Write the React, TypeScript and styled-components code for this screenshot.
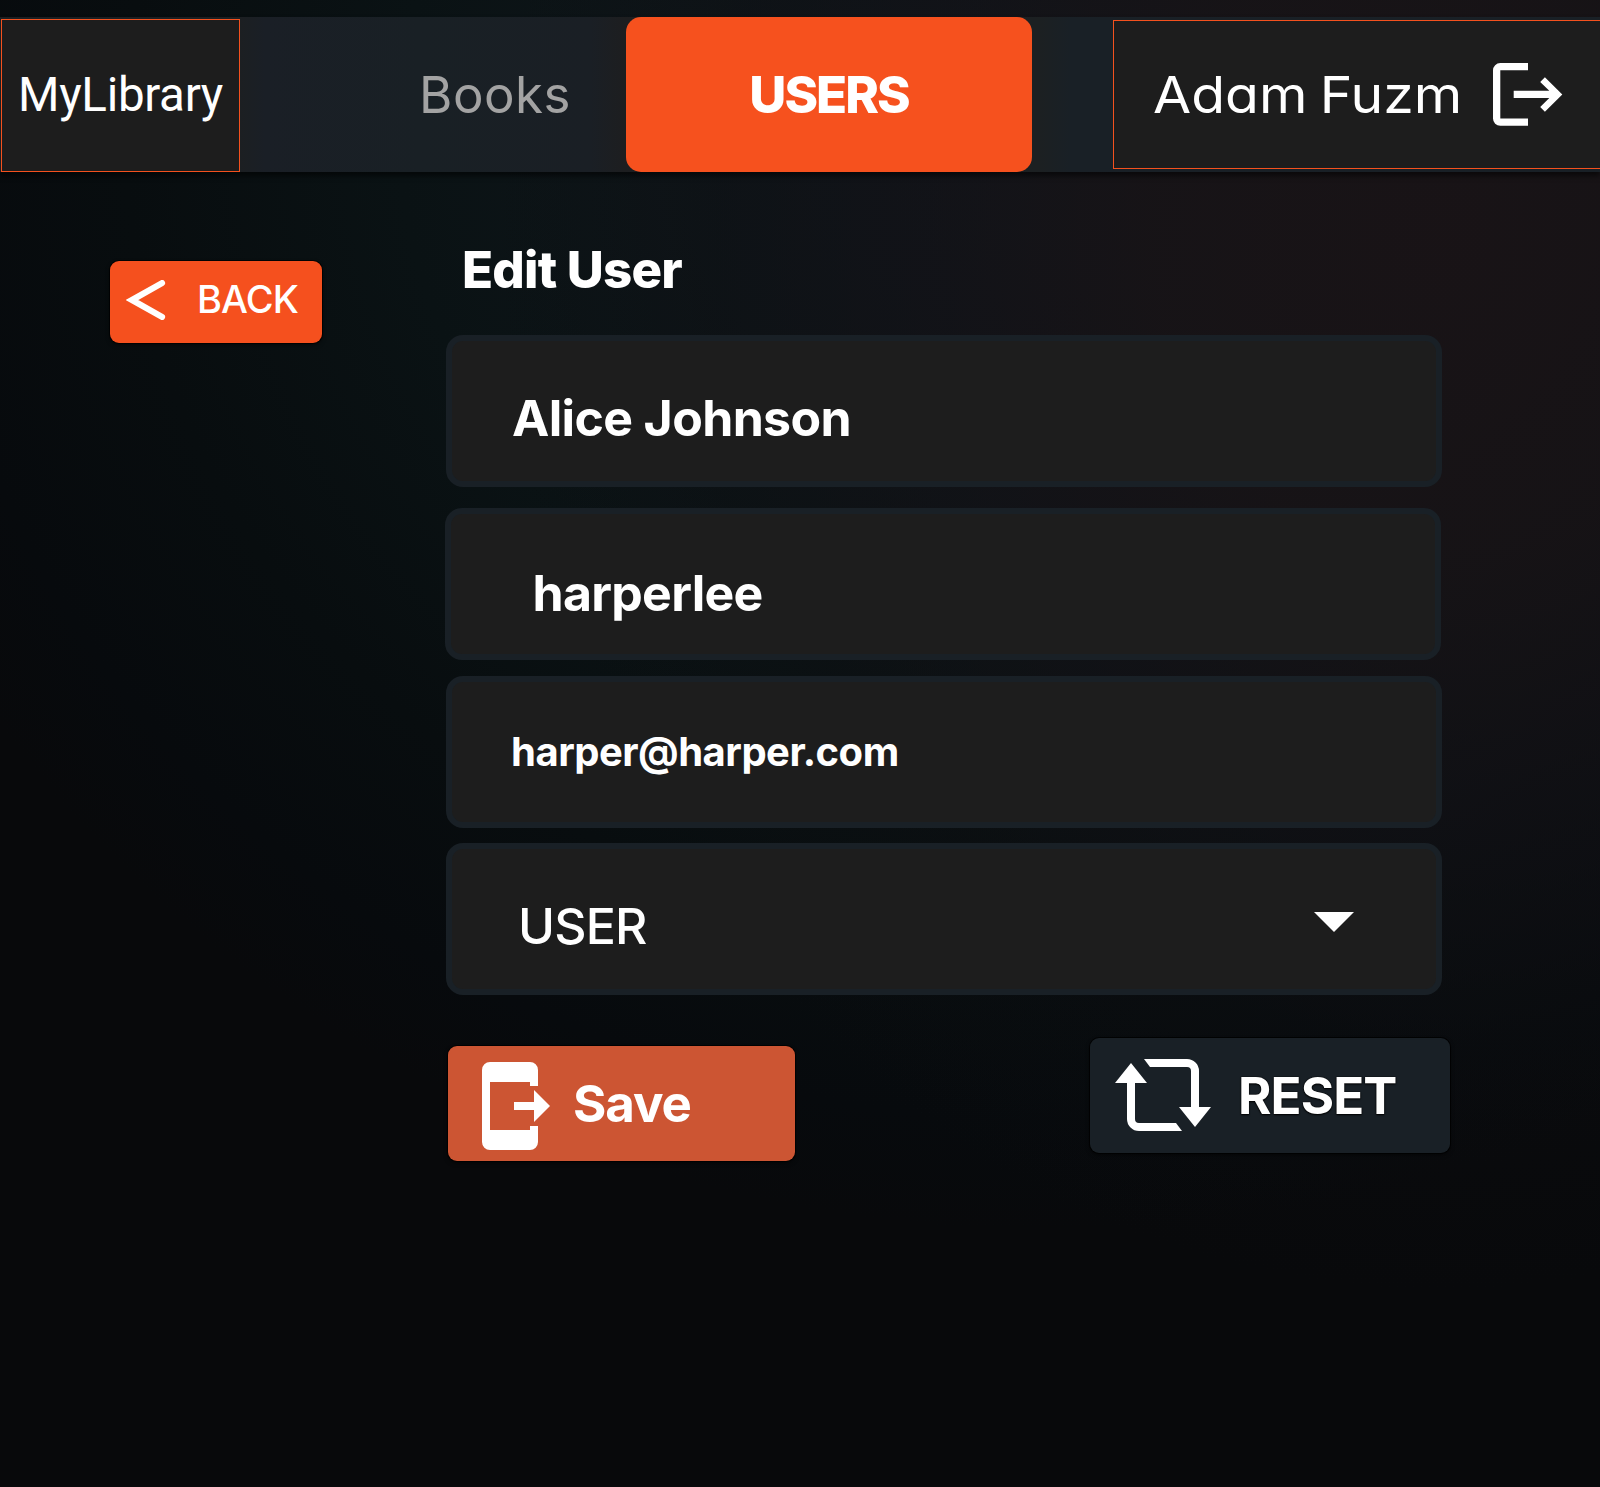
import React from "react";
import styled, { createGlobalStyle } from "styled-components";

const GlobalStyle = createGlobalStyle`
  *, *::before, *::after { box-sizing: border-box; }
  body { margin: 0; background: #08090b; }
`;

const Page = styled.div`
  width: 1600px;
  height: 1487px;
  padding-top: 17px;
  overflow: hidden;
  color: #fff;
  font-family: Inter, "Liberation Sans", sans-serif;
  background:
    radial-gradient(
      950px 1050px at 1440px 240px,
      rgba(25, 19, 22, 0.95) 0%,
      rgba(24, 19, 22, 0.85) 30%,
      rgba(19, 17, 22, 0.65) 54%,
      rgba(13, 14, 17, 0.4) 76%,
      rgba(8, 9, 11, 0) 100%
    ),
    radial-gradient(
      1250px 1100px at 1050px 130px,
      #10171d 0%,
      #0e1519 30%,
      #0a1214 52%,
      #080d0f 74%,
      #070a0d 90%,
      #08090b 100%
    );
`;

const Header = styled.header`
  display: flex;
  height: 155px;
  background: linear-gradient(
    90deg,
    #1c1f22 240px,
    #1a1f26 265px,
    #192025 420px,
    #1a1f25 590px,
    #1d1e20 624px,
    #1c2022 1040px,
    #192026 1070px
  );
  box-shadow: 0 4px 5px rgba(0, 0, 0, 0.55);
`;

const Logo = styled.div`
  width: 239px;
  height: 153px;
  margin: 2px 0 0 1px;
  padding-left: 16px;
  border: 1px solid #f4511e;
  background: #1d1d1d;
  display: flex;
  align-items: center;
`;

const Nav = styled.nav`
  display: flex;
  width: 873px;
`;

const Tab = styled.a<{ $active?: boolean }>`
  display: flex;
  align-items: center;
  justify-content: ${(p) => (p.$active ? "center" : "flex-end")};
  width: ${(p) => (p.$active ? 406 : 386)}px;
  padding-right: ${(p) => (p.$active ? 0 : 55)}px;
  border-radius: 15px;
  background: ${(p) => (p.$active ? "#f6511e" : "transparent")};
`;

const Account = styled.div`
  flex: 1;
  height: 149px;
  margin-top: 3px;
  padding: 0 37px 0 39px;
  border: 1px solid #f4511e;
  border-right: 0;
  background: #1d1d1d;
  display: flex;
  align-items: center;
  justify-content: space-between;
`;

const Label = styled.span<{
  $size: number;
  $weight?: number;
  $track?: number;
  $color?: string;
  $round?: boolean;
  $outlined?: boolean;
}>`
  white-space: pre;
  line-height: 1.2;
  font-size: ${(p) => p.$size}px;
  font-weight: ${(p) => p.$weight ?? 400};
  letter-spacing: ${(p) => p.$track ?? 0}px;
  color: ${(p) => p.$color ?? "#fff"};
  font-feature-settings: ${(p) => (p.$round ? '"cv11" 1' : "normal")};
  text-shadow: ${(p) =>
    p.$outlined ? "0 0 1px #000, 0 0 1px #000, 0 1px 2px #000" : "none"};
`;

const Brand = styled(Label)`
  font-family: Roboto, sans-serif;
`;

const WideLabel = styled(Label)`
  word-spacing: -3px;
  transform: scaleX(1.085);
  transform-origin: left center;
`;

const Main = styled.main`
  display: grid;
  grid-template-columns: 212px 1005px;
  column-gap: 123px;
  padding: 67px 0 0 110px;
  align-items: start;
`;

const Button = styled.button<{ $bg: string; $w: number; $h: number; $pad: number; $gap: number }>`
  display: flex;
  align-items: center;
  gap: ${(p) => p.$gap}px;
  width: ${(p) => p.$w}px;
  height: ${(p) => p.$h}px;
  padding: 0 0 0 ${(p) => p.$pad}px;
  border: 0;
  border-radius: 9px;
  background: ${(p) => p.$bg};
  font-family: inherit;
  box-shadow: 0 0 0 1px rgba(0, 0, 0, 0.8), 0 2px 4px rgba(0, 0, 0, 0.6);
`;

const BackSlot = styled.div`
  padding-top: 22px;
`;

const BackLabel = styled(Label)`
  padding-bottom: 4px;
`;

const Icon = styled.svg<{ $up?: number; $down?: number }>`
  display: block;
  flex: none;
  margin-bottom: ${(p) => p.$up ?? 0}px;
  margin-top: ${(p) => p.$down ?? 0}px;
  fill: #fff;
`;

const Form = styled.section`
  display: flex;
  flex-direction: column;
`;

const Title = styled.h1`
  margin: 0 0 34px 17px;
  height: 62px;
  font-size: 51px;
  line-height: 62px;
  font-weight: 800;
  letter-spacing: -0.8px;
`;

const Field = styled.div<{ $gap: number; $indent: number; $drop?: number; $shift?: number }>`
  display: flex;
  align-items: center;
  justify-content: space-between;
  width: 996px;
  height: 152px;
  margin: 0 0 ${(p) => p.$gap}px ${(p) => p.$shift ?? 1}px;
  padding: ${(p) => p.$drop ?? 0}px 82px 0 ${(p) => p.$indent}px;
  border: 6px solid #192026;
  border-radius: 17px;
  background: #1d1d1d;
`;

const Actions = styled.div`
  display: flex;
  justify-content: space-between;
  padding-left: 3px;
`;

const SaveSlot = styled.div`
  padding-top: 8px;
`;

const ChevronIcon = () => (
  <Icon $up={4} width="40" height="40" viewBox="0 0 40 40">
    <path d="M36 3.1 6 20l30 16.9" fill="none" stroke="#fff" strokeWidth="6.2" strokeLinecap="round" />
  </Icon>
);

const LogoutIcon = () => (
  <Icon width="70" height="63" viewBox="0 0 70 63">
    <path d="M35 0v7.3H7.3v48.2H35v7.3H7.3A7.3 7.3 0 0 1 0 55.5V7.3A7.3 7.3 0 0 1 7.3 0z" />
    <path d="M51.9 14.2 69.3 31.4 51.9 48.7 47.2 44l9.1-9H20.7v-7.3h35.6l-9.1-8.8z" />
  </Icon>
);

const SaveIcon = () => (
  <Icon $down={4} width="68" height="88" viewBox="0 0 68 88">
    <path d="M8 0h40a8 8 0 0 1 8 8v16h-8v-4H8v48h40v-4h8v16a8 8 0 0 1-8 8H8a8 8 0 0 1-8-8V8a8 8 0 0 1 8-8z" />
    <path d="M32 40h20V28l16 16-16 16V48H32z" />
  </Icon>
);

const ResetIcon = () => (
  <Icon $up={1} width="96" height="72" viewBox="0 0 96 72">
    <path d="M16 4 32 24H20v36a4 4 0 0 0 4 4h37l6 8H24a12 12 0 0 1-12-12V24H0z" />
    <path d="M29 0h43a12 12 0 0 1 12 12v36h12L80 68 64 48h12V12a4 4 0 0 0-4-4H35z" />
  </Icon>
);

const CaretIcon = () => (
  <Icon $up={8} width="40" height="20" viewBox="0 0 40 20">
    <path d="M0 0h40L20 20z" />
  </Icon>
);

export default function App() {
  return (
    <>
      <GlobalStyle />
      <Page>
        <Header>
          <Logo>
            <Brand $size={47.5} $track={-0.3}>MyLibrary</Brand>
          </Logo>
          <Nav>
            <Tab>
              <Label $size={51} $round $track={0.5} $color="#a3a3a3">Books</Label>
            </Tab>
            <Tab $active>
              <Label $size={51} $weight={800} $track={-2}>USERS</Label>
            </Tab>
          </Nav>
          <Account>
            <WideLabel $size={51} $round>Adam Fuzm</WideLabel>
            <LogoutIcon />
          </Account>
        </Header>
        <Main>
          <BackSlot>
            <Button $bg="#f5501e" $w={212} $h={82} $pad={16} $gap={31}>
              <ChevronIcon />
              <BackLabel $size={38} $weight={450} $track={-0.9}>BACK</BackLabel>
            </Button>
          </BackSlot>
          <Form>
            <Title>Edit User</Title>
            <Field $gap={21} $indent={60} $drop={14}>
              <Label $size={50} $weight={700} $track={-0.65}>Alice Johnson</Label>
            </Field>
            <Field $gap={16} $indent={81.500} $drop={18} $shift={0}>
              <Label $size={50} $weight={700} $track={-0.7}>harperlee</Label>
            </Field>
            <Field $gap={15} $indent={59}>
              <Label $size={40} $weight={700} $track={-0.5}>harper@harper.com</Label>
            </Field>
            <Field $gap={43} $indent={66} $drop={14}>
              <Label $size={50} $weight={450} $track={-0.8}>USER</Label>
              <CaretIcon />
            </Field>
            <Actions>
              <SaveSlot>
                <Button $bg="#cc5533" $w={347} $h={115} $pad={34} $gap={23}>
                  <SaveIcon />
                  <Label $size={51} $weight={700} $track={-1.1}>Save</Label>
                </Button>
              </SaveSlot>
              <Button $bg="#192026" $w={360} $h={115} $pad={25} $gap={27}>
                <ResetIcon />
                <Label $size={51} $weight={700} $track={-0.9} $outlined>RESET</Label>
              </Button>
            </Actions>
          </Form>
        </Main>
      </Page>
    </>
  );
}
